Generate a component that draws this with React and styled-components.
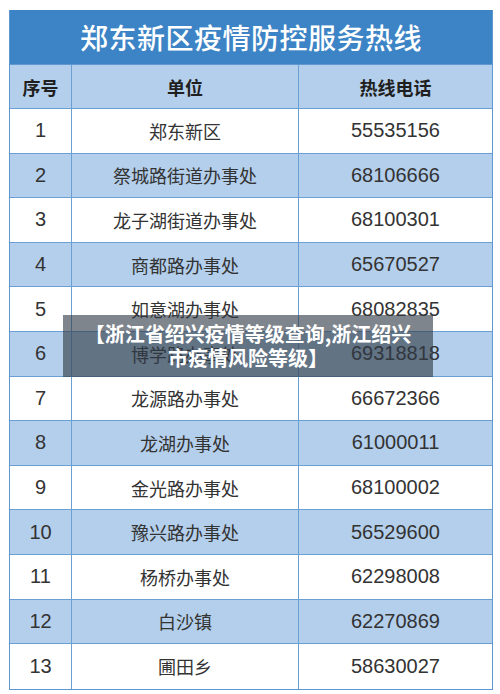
import React from "react";
import styled, { createGlobalStyle } from "styled-components";

const GlobalStyle = createGlobalStyle`
    html, body {
        margin: 0;
        padding: 0;
        background: #ffffff;
    }
    body {
        font-family: "Noto Sans CJK SC", "Liberation Sans", sans-serif;
    }
`;

const Page = styled.div`
    position: relative;
    width: 500px;
    height: 694px;
    padding: 10px 7px 0 9px;
    box-sizing: border-box;
    overflow: hidden;
`;

const Table = styled.div`
    width: 484px;
    border: 1px solid #5f98d0;
    border-top: none;
    box-sizing: border-box;
`;

const Title = styled.div`
    height: 55px;
    background: #3c84c5;
    color: #ffffff;
    font-size: 28px;
    font-weight: 500;
    display: flex;
    align-items: center;
    justify-content: center;
    letter-spacing: 0.5px;
    border-bottom: 1px solid #5f98d0;
    box-sizing: border-box;
`;

const Row = styled.div`
    display: grid;
    grid-template-columns: 62px 227px 1fr;
    height: ${(p) => p.$h}px;
    background: ${(p) => (p.$shade ? "#b4cfeb" : "#ffffff")};
    border-bottom: ${(p) => (p.$last ? "none" : "1px solid #6a9fd4")};
    box-sizing: border-box;
`;

const Cell = styled.div`
    display: flex;
    align-items: center;
    justify-content: center;
    color: ${(p) => (p.$head ? "#1f1f1f" : "#333333")};
    font-size: ${(p) => (p.$num ? "20px" : "18px")};
    font-weight: ${(p) => (p.$head ? 700 : 400)};
    font-family: ${(p) =>
        p.$num
            ? '"Liberation Sans", "Noto Sans CJK SC", sans-serif'
            : '"Noto Sans CJK SC", "Liberation Sans", sans-serif'};
    border-right: ${(p) => (p.$end ? "none" : "1px solid #6a9fd4")};
`;

const Overlay = styled.div`
    position: absolute;
    left: 63px;
    top: 315px;
    width: 370px;
    height: 62px;
    background: rgba(48, 58, 70, 0.62);
    color: #ffffff;
    font-size: 20px;
    font-weight: 700;
    line-height: 24px;
    text-align: center;
    display: flex;
    flex-direction: column;
    justify-content: center;
`;

const rows = [
    ["1", "郑东新区", "55535156"],
    ["2", "祭城路街道办事处", "68106666"],
    ["3", "龙子湖街道办事处", "68100301"],
    ["4", "商都路办事处", "65670527"],
    ["5", "如意湖办事处", "68082835"],
    ["6", "博学路办事处", "69318818"],
    ["7", "龙源路办事处", "66672366"],
    ["8", "龙湖办事处", "61000011"],
    ["9", "金光路办事处", "68100002"],
    ["10", "豫兴路办事处", "56529600"],
    ["11", "杨桥办事处", "62298008"],
    ["12", "白沙镇", "62270869"],
    ["13", "圃田乡", "58630027"],
];

const App = () => {
    return (
        <Page>
            <GlobalStyle />
            <Table>
                <Title>郑东新区疫情防控服务热线</Title>
                <Row $h={44} $shade>
                    <Cell $head>序号</Cell>
                    <Cell $head>单位</Cell>
                    <Cell $head $end>热线电话</Cell>
                </Row>
                {rows.map((r, i) => (
                    <Row key={r[0]} $h={44.6} $shade={i % 2 === 1} $last={i === rows.length - 1}>
                        <Cell $num>{r[0]}</Cell>
                        <Cell>{r[1]}</Cell>
                        <Cell $num $end>{r[2]}</Cell>
                    </Row>
                ))}
            </Table>
            <Overlay>
                <span>【浙江省绍兴疫情等级查询,浙江绍兴</span>
                <span>市疫情风险等级】</span>
            </Overlay>
        </Page>
    );
};

export default App;
